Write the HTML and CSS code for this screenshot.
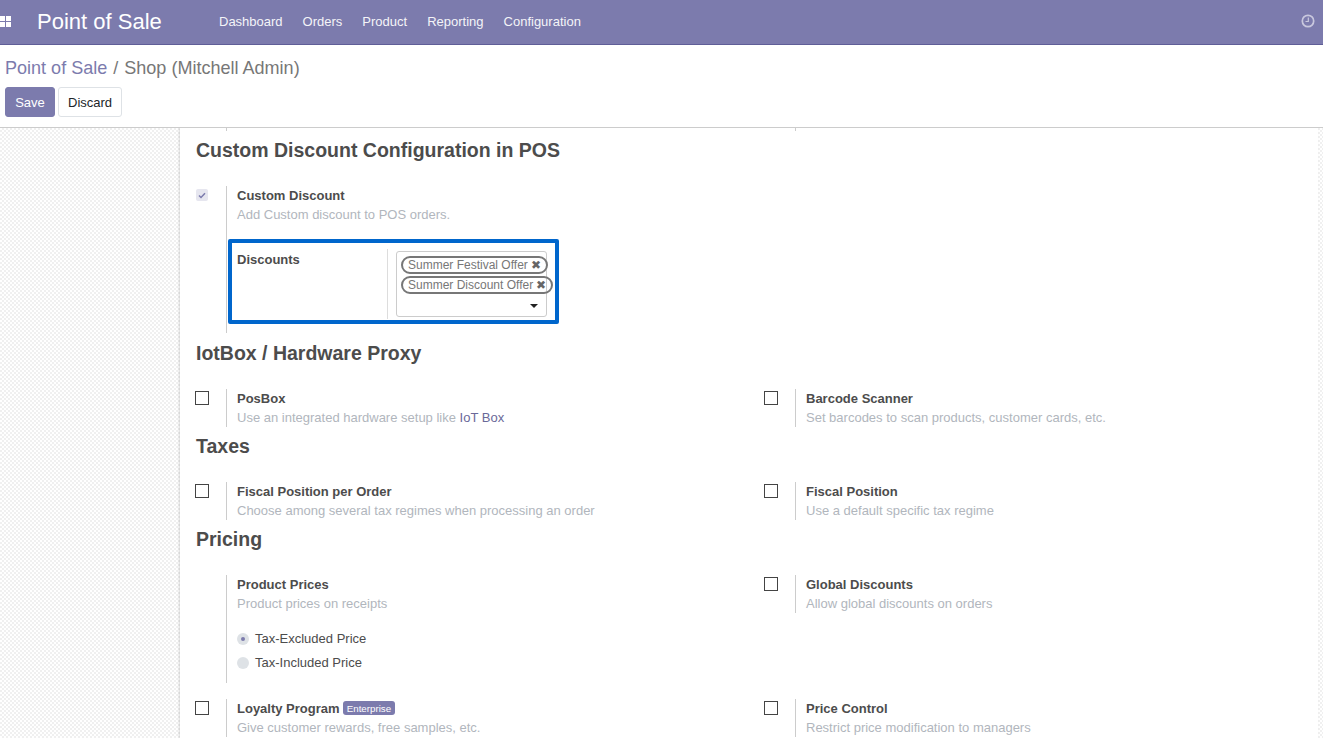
FILE: index.html
```html
<!DOCTYPE html>
<html lang="en">
<head>
<meta charset="utf-8">
<title>Point of Sale</title>
<link rel="stylesheet" href="styles.css">
</head>
<body>
<header class="navbar">
  <svg class="apps" width="11" height="11" viewBox="0 0 11 11"><path d="M0 0h5v5H0zM6 0h5v5H6zM0 6h5v5H0zM6 6h5v5H6z" fill="#fff"/></svg>
  <span class="brand">Point of Sale</span>
  <nav class="menu"><a>Dashboard</a><a>Orders</a><a>Product</a><a>Reporting</a><a>Configuration</a></nav>
  <svg class="clock" width="14" height="14" viewBox="0 0 14 14"><circle cx="7" cy="7" r="5.700" fill="none" stroke="#c9c8de" stroke-width="1.700"/><path d="M7.300 3.500v4H4.500" fill="none" stroke="#c9c8de" stroke-width="1.200"/></svg>
</header>
<section class="control">
  <div class="crumbs"><span class="crumb-link">Point of Sale</span><span class="crumb-sep">/</span><span>Shop (Mitchell Admin)</span></div>
  <div class="buttons"><button class="btn primary">Save</button><button class="btn">Discard</button></div>
</section>
<main class="content">
  <div class="sheet">
    <div class="cut"><i></i><i></i></div>

    <h2>Custom Discount Configuration in POS</h2>
    <div class="rows first">
      <div class="setting">
        <span class="soft"><svg width="8" height="7" viewBox="0 0 8 7"><path d="M1 3.500l2 2L7 1.200" fill="none" stroke="#7c7bad" stroke-width="1.500"/></svg></span>
        <div class="body wide">
          <b>Custom Discount</b>
          <p>Add Custom discount to POS orders.</p>
          <div class="callout">
            <b class="field-label">Discounts</b>
            <div class="field-cell">
              <div class="tags">
                <span class="tag">Summer Festival Offer <em>✖</em></span>
                <span class="tag">Summer Discount Offer <em>✖</em></span>
                <span class="caret"></span>
              </div>
            </div>
          </div>
        </div>
      </div>
    </div>

    <h2>IotBox / Hardware Proxy</h2>
    <div class="rows">
      <div class="setting"><span class="box"></span><div class="body"><b>PosBox</b><p>Use an integrated hardware setup like <a>IoT Box</a></p></div></div>
      <div class="setting"><span class="box"></span><div class="body"><b>Barcode Scanner</b><p>Set barcodes to scan products, customer cards, etc.</p></div></div>
    </div>

    <h2>Taxes</h2>
    <div class="rows">
      <div class="setting"><span class="box"></span><div class="body"><b>Fiscal Position per Order</b><p>Choose among several tax regimes when processing an order</p></div></div>
      <div class="setting"><span class="box"></span><div class="body"><b>Fiscal Position</b><p>Use a default specific tax regime</p></div></div>
    </div>

    <h2>Pricing</h2>
    <div class="rows">
      <div class="setting">
        <span class="nobox"></span>
        <div class="body">
          <b>Product Prices</b><p>Product prices on receipts</p>
          <div class="radios">
            <label><span class="radio on"></span>Tax-Excluded Price</label>
            <label><span class="radio"></span>Tax-Included Price</label>
          </div>
        </div>
      </div>
      <div class="setting"><span class="box"></span><div class="body"><b>Global Discounts</b><p>Allow global discounts on orders</p></div></div>
      <div class="setting"><span class="box"></span><div class="body"><b>Loyalty Program</b> <span class="badge">Enterprise</span><p>Give customer rewards, free samples, etc.</p></div></div>
      <div class="setting"><span class="box"></span><div class="body"><b>Price Control</b><p>Restrict price modification to managers</p></div></div>
    </div>
  </div>
</main>
</body>
</html>
```
FILE: styles.css
```css
* { box-sizing: border-box; }
html, body { margin: 0; height: 100%; overflow: hidden; }
body { display: flex; flex-direction: column; font: 13px/19px "Liberation Sans", Arial, sans-serif; color: #4c4c4c; background: #fff; }
.navbar { flex: none; height: 45px; display: flex; align-items: center; background: #7c7bad; border-bottom: 1px solid #5f5e97; color: #fff; }
.apps { margin: 0 26px 1px 0; flex: none; }
.brand { font-size: 22px; width: 172px; line-height: 44px; }
.menu { display: flex; flex: 1; margin-bottom: 2px; }
.menu a { padding: 0 10px; color: #fff; opacity: .92; }
.clock { margin-right: 8px; margin-bottom: 3px; }
.control { flex: none; height: 83px; padding: 13px 5px 0; background: #fff; border-bottom: 1px solid #ccc; }
.crumbs { font-size: 18.050px; line-height: 20px; color: #777; }
.crumb-link { color: #7c7bad; }
.crumb-sep { margin: 0 6px; color: #777; }
.buttons { display: flex; gap: 3px; margin-top: 9px; }
.btn { height: 30px; padding: 0 9px; font: 13px "Liberation Sans", Arial, sans-serif; color: #212529; background: #fff; border: 1px solid #dee2e6; border-radius: 3px; }
.btn.primary { width: 50px; color: #fff; background: #7c7bad; border-color: #7c7bad; }
.content { flex: 1; min-height: 0; overflow: hidden; padding: 0 5px 0 180px; background-color: #f8f8f8; background-image: conic-gradient(#f0f0f0 25%, #fff 0 50%, #f0f0f0 0 75%, #fff 0); background-size: 4px 4px; }
.sheet { height: 100%; padding: 0 0 0 16px; background: #fff; box-shadow: -1px 0 2px rgba(0,0,0,.15); overflow: hidden; }
.cut { display: grid; grid-template-columns: 569px 1fr; height: 3px; }
.cut i { margin-left: 30px; width: 1px; background: #ccc; }
h2 { margin: 8px 0 25px; font-size: 19.500px; line-height: 22px; font-weight: 700; color: #4c4c4c; }
.rows { display: grid; grid-template-columns: 569px 1fr; row-gap: 16px; align-items: start; }
.rows.first { margin-bottom: 9px; }
.setting { display: flex; align-items: flex-start; }
.box, .soft, .nobox { flex: none; width: 14px; height: 14px; margin: 2px 17px 0 -1px; }
.box { border: 1px solid #444; background: #fff; }
.nobox { visibility: hidden; }
.soft { width: 12px; height: 12px; margin: 3px 18px 0 0; background: #e6e6ef; border-radius: 2px; display: flex; align-items: center; justify-content: center; }
.body { flex: 1; border-left: 1px solid #ccc; padding-left: 10px; }
.body b { font-weight: 700; }
.body p { margin: 0; color: #b1b6bd; }
.body a { color: #6a6999; }
.wide { padding-bottom: 9px; }
.callout { display: flex; width: 331px; height: 85px; margin: 15px 0 0 -9px; padding: 7px 0 0 5px; border: 4px solid #0066cc; border-radius: 2px; }
.field-label { width: 150px; flex: none; }
.field-cell { flex: none; height: 70px; margin-top: -1px; border-left: 1px solid #ddd; padding: 2px 0 0 8px; }
.tags { position: relative; width: 151px; height: 66px; padding: 4px; border: 1px solid #ccc; border-radius: 3px; }
.tag { display: table; height: 18px; margin-bottom: 2px; padding: 0 5px 0 5px; font-size: 12px; line-height: 14px; white-space: nowrap; color: #777; border: 2px solid #777; border-radius: 9px; }
.tag em { font-style: normal; font-size: 12px; color: #666; }
.caret { position: absolute; right: 8px; bottom: 8px; width: 0; height: 0; border: 4px solid transparent; border-top-color: #222; border-bottom: 0; }
.radios { display: flex; flex-direction: column; gap: 5px; padding: 16px 0 11px; }
.radios label { display: flex; align-items: center; gap: 6px; }
.radio { width: 12px; height: 12px; border-radius: 50%; background: #dee2e6; display: flex; align-items: center; justify-content: center; }
.radio.on::after { content: ""; width: 4px; height: 4px; border-radius: 50%; background: #7c7bad; }
.badge { display: inline-block; height: 14px; padding: 0 3.500px; font-size: 9.750px; line-height: 15px; vertical-align: 1px; color: #fff; background: #7c7bad; border-radius: 3px; }
```
